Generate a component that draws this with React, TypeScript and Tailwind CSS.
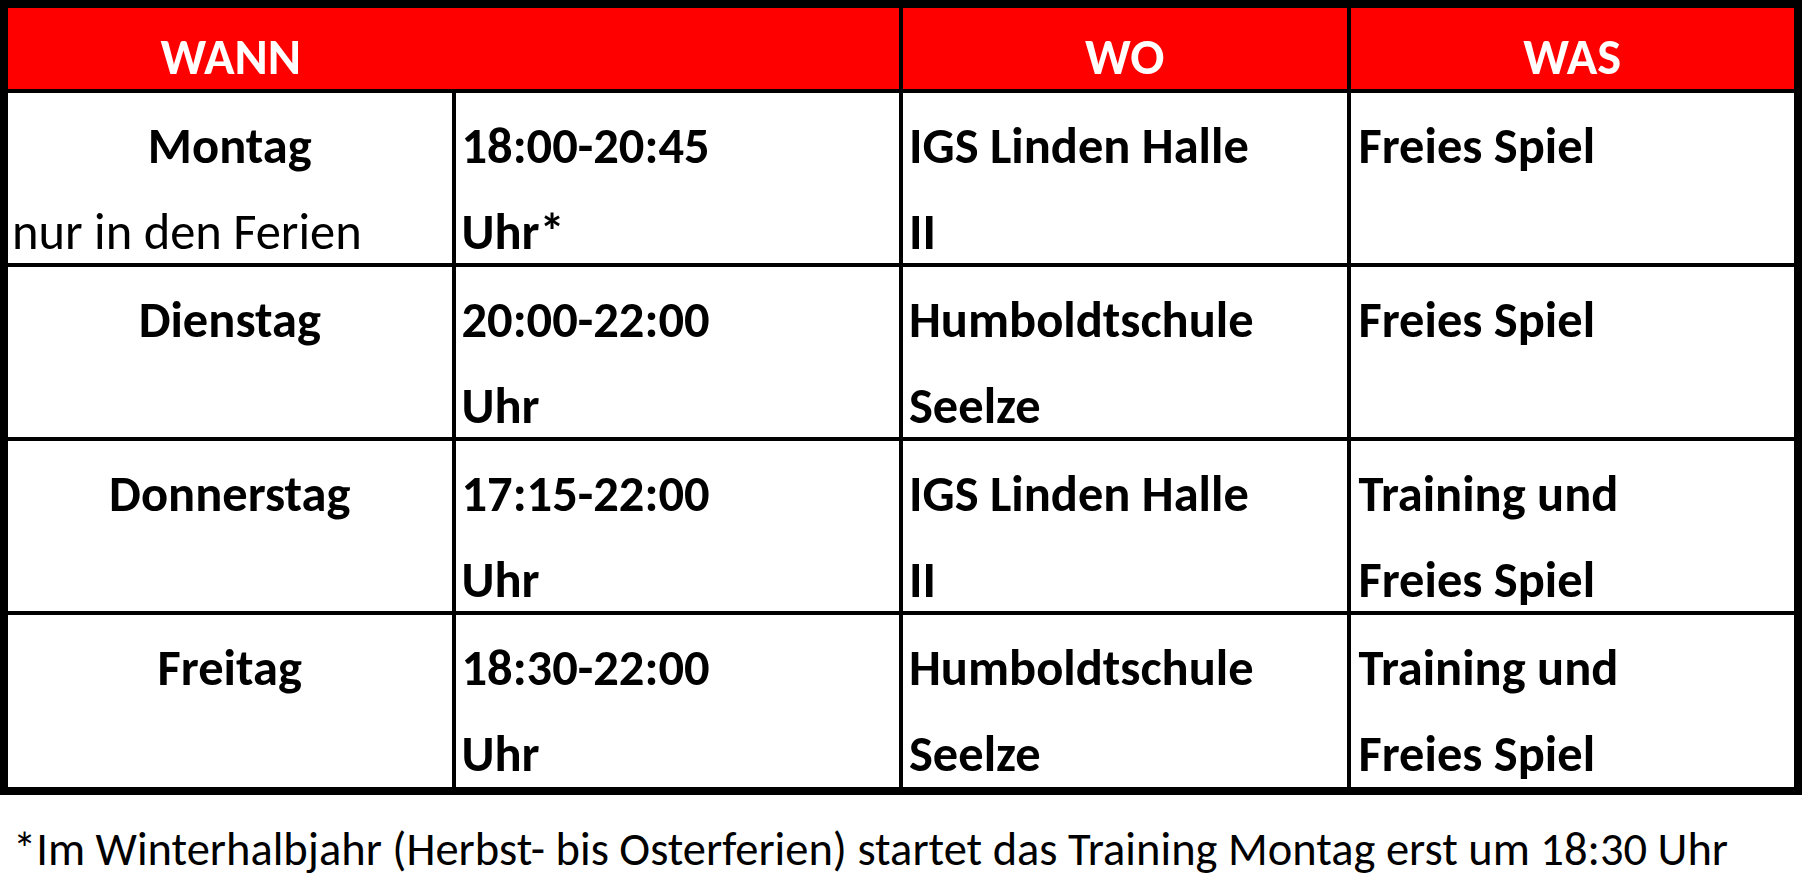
import React from 'react';

type Row = {
  day: string;
  note?: string;
  time: string[];
  place: string[];
  what: string[];
};

const rows: Row[] = [
  { day: 'Montag', note: 'nur in den Ferien', time: ['18:00-20:45', 'Uhr*'], place: ['IGS Linden Halle', 'II'], what: ['Freies Spiel'] },
  { day: 'Dienstag', time: ['20:00-22:00', 'Uhr'], place: ['Humboldtschule', 'Seelze'], what: ['Freies Spiel'] },
  { day: 'Donnerstag', time: ['17:15-22:00', 'Uhr'], place: ['IGS Linden Halle', 'II'], what: ['Training und', 'Freies Spiel'] },
  { day: 'Freitag', time: ['18:30-22:00', 'Uhr'], place: ['Humboldtschule', 'Seelze'], what: ['Training und', 'Freies Spiel'] },
];

const Lines: React.FC<{ lines: string[]; className: string }> = ({ lines, className }) => (
  <div className={`bg-white pt-[10px] font-bold whitespace-nowrap ${className}`}>
    {lines.map((l) => (
      <div key={l}>{l}</div>
    ))}
  </div>
);

export default function App() {
  return (
    <div className="w-[1802px] bg-white text-black font-['Carlito','Lato',sans-serif] text-[50.5px] leading-[86px]">
      {/* Schedule table */}
      <div className="grid grid-cols-4 grid-rows-[81px_170px_170px_170px_172px] gap-1 bg-black border-8 border-black">
        <div className="col-span-2 grid grid-cols-2 bg-[#ff0000] text-white font-bold pt-[6px]">
          <div className="text-center">WANN</div>
        </div>
        <div className="bg-[#ff0000] text-white font-bold text-center pt-[6px]">WO</div>
        <div className="bg-[#ff0000] text-white font-bold text-center pt-[6px]">WAS</div>

        {rows.map((r) => (
          <React.Fragment key={r.day}>
            <div className="bg-white pt-[10px] whitespace-nowrap">
              <div className="text-center font-bold">{r.day}</div>
              {r.note && <div className="pl-[4px]">{r.note}</div>}
            </div>
            <Lines lines={r.time} className="pl-[6px]" />
            <Lines lines={r.place} className="pl-[6px]" />
            <Lines lines={r.what} className="pl-[8px]" />
          </React.Fragment>
        ))}
      </div>

      <p className="mt-[26px] pl-[13px] text-[46.5px] leading-[56px] whitespace-nowrap">
        *Im Winterhalbjahr (Herbst- bis Osterferien) startet das Training Montag erst um 18:30 Uhr
      </p>
    </div>
  );
}
